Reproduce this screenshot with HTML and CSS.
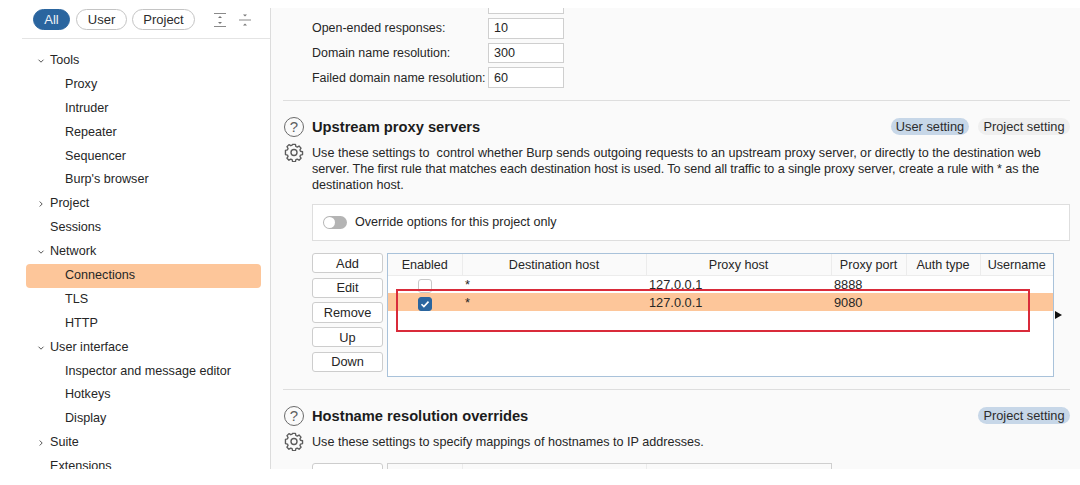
FILE: index.html
```html
<!DOCTYPE html>
<html lang="en">
<head>
<meta charset="utf-8">
<title>Connections settings</title>
<link rel="stylesheet" href="styles.css">
</head>
<body>
<div class="window">
  <aside class="sidebar">
    <div class="filters">
      <span class="pill pill-all">All</span>
      <span class="pill pill-user">User</span>
      <span class="pill pill-project">Project</span>
      <svg class="tool-icon" width="16" height="16" viewBox="0 0 16 16"><path d="M2 1.500h12M2 14.500h12" stroke="#8a8a8a" fill="none"/><path d="M6 6l2-2 2 2zM6 10l2 2 2-2z" fill="#777"/></svg>
      <svg class="tool-icon" width="16" height="16" viewBox="0 0 16 16"><path d="M2 8h12" stroke="#8a8a8a" fill="none"/><path d="M6 2.500l2 2 2-2zM6 13.500l2-2 2 2z" fill="#777"/></svg>
    </div>
    <nav class="tree">
      <div class="node"><svg class="chev" width="8" height="8" viewBox="0 0 8 8"><path d="M1.500 2.700L4 5.200l2.500-2.500" /></svg>Tools</div>
      <div class="leaf">Proxy</div>
      <div class="leaf">Intruder</div>
      <div class="leaf">Repeater</div>
      <div class="leaf">Sequencer</div>
      <div class="leaf">Burp's browser</div>
      <div class="node"><svg class="chev" width="8" height="8" viewBox="0 0 8 8"><path d="M2.700 1.500L5.200 4 2.700 6.500" /></svg>Project</div>
      <div class="node">Sessions</div>
      <div class="node"><svg class="chev" width="8" height="8" viewBox="0 0 8 8"><path d="M1.500 2.700L4 5.200l2.500-2.500" /></svg>Network</div>
      <div class="leaf selected">Connections</div>
      <div class="leaf">TLS</div>
      <div class="leaf">HTTP</div>
      <div class="node"><svg class="chev" width="8" height="8" viewBox="0 0 8 8"><path d="M1.500 2.700L4 5.200l2.500-2.500" /></svg>User interface</div>
      <div class="leaf">Inspector and message editor</div>
      <div class="leaf">Hotkeys</div>
      <div class="leaf">Display</div>
      <div class="node"><svg class="chev" width="8" height="8" viewBox="0 0 8 8"><path d="M2.700 1.500L5.200 4 2.700 6.500" /></svg>Suite</div>
      <div class="node">Extensions</div>
    </nav>
  </aside>

  <main class="main">
    <div class="fields">
      <label class="field-label">Normal:</label><span class="input">120</span>
      <label class="field-label">Open-ended responses:</label><span class="input">10</span>
      <label class="field-label">Domain name resolution:</label><span class="input">300</span>
      <label class="field-label">Failed domain name resolution:</label><span class="input">60</span>
    </div>

    <section class="section upstream">
      <div class="icons">
        <span class="help">?</span>
        <svg class="gear" width="20" height="20" viewBox="0 0 20 20"><path d="M8.400 1.600h3.200l.5 2.300 1.500.7 2-1.200 2.200 2.300-1.200 2 .6 1.500 2.300.5v3.200l-2.300.5-.6 1.500 1.200 2-2.200 2.200-2-1.200-1.500.6-.5 2.300H8.400l-.5-2.300-1.500-.6-2 1.200-2.200-2.200 1.200-2-.6-1.500-2.300-.5V8.100l2.300-.5.600-1.500-1.200-2 2.200-2.300 2 1.200 1.500-.7z" transform="translate(1 1) scale(.9)" fill="none" stroke="#5c5c5c" stroke-width="1.500" stroke-linejoin="round"/><circle cx="10" cy="10.500" r="3" fill="none" stroke="#5c5c5c" stroke-width="1.400"/></svg>
      </div>
      <div class="content">
        <div class="title-row">
          <h2>Upstream proxy servers</h2>
          <span class="badge user on">User setting</span>
          <span class="badge project">Project setting</span>
        </div>
        <p class="desc">Use these settings to&nbsp; control whether Burp sends outgoing requests to an upstream proxy server, or directly to the destination web<br><span class="tight">server. The first rule that matches each destination host is used. To send all traffic to a single proxy server, create a rule with * as the</span><br>destination host.</p>
        <div class="override"><span class="toggle"></span>Override options for this project only</div>
        <div class="table-area">
          <div class="buttons">
            <button>Add</button><button>Edit</button><button>Remove</button><button>Up</button><button>Down</button>
          </div>
          <div class="table-box">
            <table>
              <colgroup><col class="c1"><col class="c2"><col class="c3"><col class="c4"><col class="c5"><col class="c6"></colgroup>
              <thead><tr><th>Enabled</th><th>Destination host</th><th>Proxy host</th><th>Proxy port</th><th>Auth type</th><th>Username</th></tr></thead>
              <tbody>
                <tr><td class="check"><span class="box"></span></td><td>*</td><td>127.0.0.1</td><td>8888</td><td></td><td></td></tr>
                <tr class="sel"><td class="check"><span class="box checked"><svg width="14" height="14" viewBox="0 0 14 14"><path d="M3.500 7.200l2.400 2.400 4.600-5" fill="none" stroke="#fff" stroke-width="1.600"/></svg></span></td><td>*</td><td>127.0.0.1</td><td>9080</td><td></td><td></td></tr>
              </tbody>
            </table>
          </div>
          <span class="red-box"></span>
          <span class="more"></span>
        </div>
      </div>
    </section>

    <section class="section hostname">
      <div class="icons">
        <span class="help">?</span>
        <svg class="gear" width="20" height="20" viewBox="0 0 20 20"><path d="M8.400 1.600h3.200l.5 2.300 1.500.7 2-1.200 2.200 2.300-1.200 2 .6 1.500 2.300.5v3.200l-2.300.5-.6 1.500 1.200 2-2.200 2.200-2-1.200-1.500.6-.5 2.300H8.400l-.5-2.300-1.500-.6-2 1.200-2.200-2.200 1.200-2-.6-1.500-2.300-.5V8.100l2.300-.5.600-1.500-1.200-2 2.200-2.300 2 1.200 1.500-.7z" transform="translate(1 1) scale(.9)" fill="none" stroke="#5c5c5c" stroke-width="1.500" stroke-linejoin="round"/><circle cx="10" cy="10.500" r="3" fill="none" stroke="#5c5c5c" stroke-width="1.400"/></svg>
      </div>
      <div class="content">
        <div class="title-row">
          <h2>Hostname resolution overrides</h2>
          <span class="badge project on">Project setting</span>
        </div>
        <p class="desc">Use these settings to specify mappings of hostnames to IP addresses.</p>
        <div class="table-area clipped">
          <div class="buttons"><button>Add</button></div>
          <div class="table-box short">
            <table>
              <colgroup><col class="c1"><col class="c2"><col class="c3"></colgroup>
              <thead><tr><th>Enabled</th><th>Hostname</th><th>IP address</th></tr></thead>
            </table>
          </div>
        </div>
      </div>
    </section>
  </main>
</div>
</body>
</html>
```
FILE: styles.css
```css
* { box-sizing: border-box; }
html, body { margin: 0; height: 485px; background: #fff; overflow: hidden; }
body { font-family: "Liberation Sans", Arial, sans-serif; font-size: 12.6px; color: #262626; }

.window { display: flex; height: 461px; margin: 8px 0 0 22px; overflow: hidden; }

/* Sidebar */
.sidebar { width: 249px; flex: none; border-right: 1px solid #dcdcdc; background: #fff; overflow: hidden; }
.filters { display: flex; align-items: center; height: 31px; padding: 0 0 7px 11px; border-bottom: 1px solid #e4e4e4; }
.pill { display: flex; align-items: center; justify-content: center; height: 21px; border: 1px solid #c4c4c4; border-radius: 11px; color: #2c2c2c; margin-right: 5px; background: #fff; font-size: 13px; }
.pill-all { width: 37px; margin-right: 6px; background: #2a659f; border-color: #2a659f; color: #eef3f8; }
.pill-user { width: 51px; }
.pill-project { width: 63px; margin-right: 17px; }
.tool-icon { margin-right: 9px; }

.tree { padding: 10px 9px 0 4px; }
.node, .leaf { height: 23.9px; line-height: 23.9px; white-space: nowrap; }
.node { padding-left: 24px; position: relative; }
.chev { position: absolute; left: 11px; top: 8px; fill: none; stroke: #555; stroke-width: 1; }
.leaf { padding-left: 39px; }
.leaf.selected { background: #fdc69a; border-radius: 4px; }

/* Main */
.main { flex: 1; min-width: 0; background: #fafafa; padding: 0 10px 0 12px; overflow: hidden; }
.fields { display: grid; grid-template-columns: 176px 76px; grid-auto-rows: 20.67px; row-gap: 4px; align-items: center; margin: -14.67px 0 0 29px; }
.field-label { white-space: nowrap; font-size: 12.45px; }
.input { height: 100%; border: 1px solid #cfcfcf; background: #fff; padding-left: 5px; display: flex; align-items: center; }

.section { display: flex; border-top: 1px solid #dedede; }
.upstream { margin-top: 12px; padding-top: 16px; height: 289px; }
.hostname { padding-top: 16px; }
.icons { width: 29px; flex: none; display: flex; flex-direction: column; gap: 5px; padding-left: 1px; }
.help { width: 20px; height: 20px; border: 1.500px solid #6a6a6a; border-radius: 50%; color: #5f5f5f; font-size: 15px; display: flex; align-items: center; justify-content: center; }
.gear { display: block; }
.content { flex: 1; min-width: 0; position: relative; }
.title-row { display: flex; align-items: center; height: 20px; gap: 9px; }
h2 { margin: 0 auto 0 0; font-size: 14.7px; font-weight: bold; color: #1c1c1c; }
.badge { height: 17px; line-height: 17px; text-align: center; border-radius: 9px; background: #efefef; color: #2c2c2c; font-size: 12.8px; }
.badge.user { width: 78px; }
.badge.project { width: 92px; }
.badge.on { background: #c7d7e8; }
.desc { margin: 8px 0 0; line-height: 16px; white-space: nowrap; }
.tight { letter-spacing: -0.06px; }
.override { display: flex; align-items: center; height: 37px; margin-top: 11px; padding-left: 10px; gap: 8px; border: 1px solid #dedede; background: #fff; }
.toggle { position: relative; width: 24px; height: 13px; border-radius: 7px; background: #b4b4b4; }
.toggle::before { content: ""; position: absolute; left: 1px; top: 1px; width: 11px; height: 11px; border-radius: 50%; background: #fff; }

.table-area { position: relative; display: flex; margin-top: 12px; gap: 4px; }
.clipped { margin-top: 13px; }
.buttons { width: 71px; flex: none; display: flex; flex-direction: column; gap: 4.170px; }
button { height: 20.500px; padding: 0; border: 1px solid #cdcdcd; border-radius: 3px; background: #fff; font: 12.8px "Liberation Sans", Arial, sans-serif; color: #262626; }
.table-box { width: 667px; height: 124px; border: 1px solid #a9c2da; background: #fff; overflow: hidden; }
table { width: 100%; border-collapse: collapse; table-layout: fixed; }
.c1 { width: 74px; } .c2 { width: 184px; } .c3 { width: 185px; } .c4 { width: 75px; } .c5 { width: 74px; } .c6 { width: 73px; }
th { height: 22px; padding: 1px 0 0; font-weight: normal; text-align: center; background: #fafafa; border-right: 1px solid #ececec; border-bottom: 1px solid #ececec; white-space: nowrap; }
th:last-child { border-right: 0; }
td { height: 17px; padding: 0 0 0 3px; vertical-align: middle; border: 0; line-height: 17px; font-size: 12.8px; }
tr.sel td { background: #fdc69a; height: 18px; }
td.check { padding: 0; text-align: center; }
.box { display: inline-flex; width: 14px; height: 14px; border: 1px solid #c8c8c8; border-radius: 3px; background: #fff; vertical-align: middle; }
.box.checked { background: #2a659f; border-color: #2a659f; }
.box svg { margin: -1px; }
.red-box { position: absolute; left: 84px; top: 36px; width: 634px; height: 43px; border: 2px solid #d92b3a; }
.more { position: absolute; left: 743px; top: 58px; border-left: 7px solid #111; border-top: 4px solid transparent; border-bottom: 4px solid transparent; }

.short { width: 445px; border-color: #cfcfcf; }
.short .c1 { width: 74px; } .short .c2 { width: 184px; } .short .c3 { width: 185px; }
```
